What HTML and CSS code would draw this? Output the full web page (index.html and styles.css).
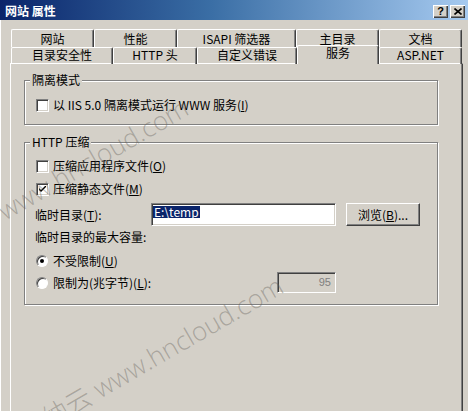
FILE: index.html
```html
<!DOCTYPE html>
<html lang="zh-CN">
<head>
<meta charset="utf-8">
<title>网站 属性</title>
<link rel="stylesheet" href="styles.css">
</head>
<body>
<div class="dialog">
	<div class="titlebar">
		<span class="title">网站 属性</span>
		<span class="capbtn help">?</span>
		<span class="capbtn">
			<svg width="8" height="7" viewBox="0 0 8 7"><path d="M0.5 0.5 L7.5 6.5 M7.5 0.5 L0.5 6.5" stroke="#000" stroke-width="1.6" fill="none"/></svg>
		</span>
	</div>

	<div class="tabs">
		<div class="tabrow back">
			<div class="tab" style="width:83px">网站</div>
			<div class="tab" style="width:83px">性能</div>
			<div class="tab" style="width:119px">ISAPI 筛选器</div>
			<div class="tab" style="width:83px">主目录</div>
			<div class="tab" style="width:83px">文档</div>
		</div>
		<div class="tabrow front">
			<div class="tab" style="width:102px">目录安全性</div>
			<div class="tab" style="width:84px">HTTP 头</div>
			<div class="tab" style="width:100px">自定义错误</div>
			<div class="tab current" style="width:82px">服务</div>
			<div class="tab" style="width:83px">ASP.NET</div>
		</div>
	</div>

	<div class="panel">
		<fieldset class="group isolate">
			<legend>隔离模式</legend>
			<div class="row">
				<span class="check"></span>
				<span>以 IIS 5.0 隔离模式运行 WWW 服务(<u>I</u>)</span>
			</div>
		</fieldset>

		<fieldset class="group compress">
			<legend>HTTP 压缩</legend>
			<div class="row first">
				<span class="check"></span>
				<span>压缩应用程序文件(<u>O</u>)</span>
			</div>
			<div class="row gap7">
				<span class="check">
					<svg width="7" height="7" viewBox="0 0 7 7"><path d="M0 2 L0 4 L2 6 L7 1 L7 -1 L2 4 Z" fill="#000"/></svg>
				</span>
				<span>压缩静态文件(<u>M</u>)</span>
			</div>
			<div class="row dirrow">
				<span class="dirlabel">临时目录(<u>T</u>):</span>
				<span class="textbox"><span class="sel">E:\temp</span></span>
				<span class="button">浏览(<u>B</u>)...</span>
			</div>
			<div class="caption">临时目录的最大容量:</div>
			<div class="row gap9">
				<span class="radio on"></span>
				<span>不受限制(<u>U</u>)</span>
			</div>
			<div class="row limitrow">
				<span class="radio"></span>
				<span>限制为(兆字节)(<u>L</u>):</span>
				<span class="numbox">95</span>
			</div>
		</fieldset>
	</div>

	<span class="mark mark1">华纳云 www.hncloud.com</span>
	<span class="mark mark2">华纳云 www.hncloud.com</span>
</div>
</body>
</html>
```

FILE: styles.css
```css
body {
	margin: 0;
	background: #d4d0c8;
	font: 12px/14px "Noto Sans CJK SC", "Liberation Sans", sans-serif;
	color: #000;
	overflow: hidden;
}
.dialog {
	position: relative;
	width: 468px;
	height: 411px;
	overflow: hidden;
	box-shadow: inset 1px 0 #fff;
}

/* caption bar */
.titlebar {
	height: 20px;
	display: flex;
	align-items: center;
	padding: 0 3px 0 5px;
	background: linear-gradient(to right, #0a246a, #3a6ea5 45%, #a6caf0);
}
.title {
	flex: 1;
	color: #fff;
	font-weight: bold;
	padding-top: 2px;
}
.capbtn {
	box-sizing: border-box;
	width: 15px;
	height: 13px;
	margin: 3px 0 0 2px;
	display: flex;
	align-items: center;
	justify-content: center;
	background: #d4d0c8;
	box-shadow: inset 1px 1px #fff, inset -1px -1px #404040, inset -2px -2px #808080;
}
.help {
	font: bold 11px/11px "Liberation Sans", sans-serif;
}

/* tabs */
.tabs {
	position: relative;
	z-index: 1;
	width: 451px;
	margin: 9px 0 -1px 11px;
}
.tabrow {
	display: flex;
}
.tabrow.back {
	height: 18px;
}
.tabrow.front {
	height: 17px;
}
.tab {
	box-sizing: border-box;
	flex: none;
	border: 1px solid #fff;
	border-bottom: 0;
	border-right-color: #404040;
	border-radius: 2px 2px 0 0;
	box-shadow: inset -1px 0 #808080;
	text-align: center;
}
.back .tab {
	padding-top: 2px;
}
.tab.current {
	height: 19px;
	margin-top: -2px;
	background: #d4d0c8;
}

/* page */
.panel {
	box-sizing: border-box;
	width: 453px;
	height: 360px;
	margin-left: 10px;
	padding: 9px 0 0 13px;
	border-top: 1px solid #fff;
	border-left: 1px solid #fff;
	border-right: 1px solid #404040;
	box-shadow: inset -1px 0 #808080;
}
.group {
	box-sizing: border-box;
	width: 414px;
	min-width: 0;
	margin: 0;
	border: 1px solid #808080;
	box-shadow: 1px 1px 0 #fff, inset 1px 1px 0 #fff;
}
.group legend {
	margin-left: -6px;
	padding: 0 2px;
	background: #d4d0c8;
}
.isolate {
	padding: 10px 17px 11px 11px;
}
.compress {
	margin-top: 10px;
	padding: 0 17px 11px 11px;
}

.row {
	display: flex;
	align-items: center;
	height: 16px;
}
.row.first {
	margin-top: 9px;
}
.row.gap7 {
	margin-top: 7px;
}
.row.gap9 {
	margin-top: 9px;
}
.check {
	box-sizing: border-box;
	flex: none;
	width: 13px;
	height: 13px;
	margin-right: 4px;
	display: flex;
	align-items: center;
	justify-content: center;
	background: #fff;
	border: 1px solid;
	border-color: #808080 #fff #fff #808080;
	box-shadow: inset 1px 1px #404040, inset -1px -1px #d4d0c8;
}
.radio {
	box-sizing: border-box;
	flex: none;
	width: 12px;
	height: 12px;
	margin: 0 5px 0 0;
	border-radius: 50%;
	background: #fff;
	border: 1px solid;
	border-color: #808080 #fff #fff #808080;
	box-shadow: inset 1px 1px #404040;
	display: flex;
	align-items: center;
	justify-content: center;
}
.radio.on::after {
	content: "";
	width: 4px;
	height: 4px;
	border-radius: 50%;
	background: #000;
}

.dirrow {
	height: 23px;
	margin-top: 6px;
}
.dirlabel {
	flex: 1;
	margin-left: -1px;
}
.textbox {
	box-sizing: border-box;
	width: 185px;
	height: 23px;
	padding: 1px 0 0 0;
	background: #fff;
	border: 1px solid;
	border-color: #808080 #fff #fff #808080;
	box-shadow: inset 1px 1px #404040, inset -1px -1px #d4d0c8;
	display: flex;
	align-items: flex-start;
}
.sel {
	margin: 1px 0 0 1px;
	padding: 0 1px;
	line-height: 12px;
	background: #0a246a;
	color: #fff;
}
.button {
	box-sizing: border-box;
	width: 74px;
	height: 23px;
	margin-left: 10px;
	display: flex;
	align-items: center;
	justify-content: center;
	border: 1px solid;
	border-color: #fff #404040 #404040 #fff;
	box-shadow: inset -1px -1px #808080;
}
.caption {
	margin: 4px 0 0 -1px;
}
.limitrow {
	height: 21px;
	margin-top: 3px;
}
.numbox {
	box-sizing: border-box;
	width: 59px;
	height: 21px;
	margin: 0 84px 0 auto;
	padding-right: 4px;
	text-align: right;
	font: 11px/19px "Liberation Sans", sans-serif;
	color: #808080;
	border: 1px solid;
	border-color: #808080 #fff #fff #808080;
	box-shadow: inset 1px 1px #404040;
}

/* watermark over the shot */
.mark {
	position: absolute;
	z-index: 2;
	white-space: nowrap;
	font: 300 26px/26px "Open Sans", "Liberation Sans", "Noto Sans CJK SC", sans-serif;
	color: rgba(100, 96, 90, 0.4);
	transform-origin: 0 100%;
	transform: rotate(-30deg);
	pointer-events: none;
}
.mark1 {
	left: -67px;
	top: 240px;
}
.mark2 {
	left: 28px;
	top: 418px;
}
```
